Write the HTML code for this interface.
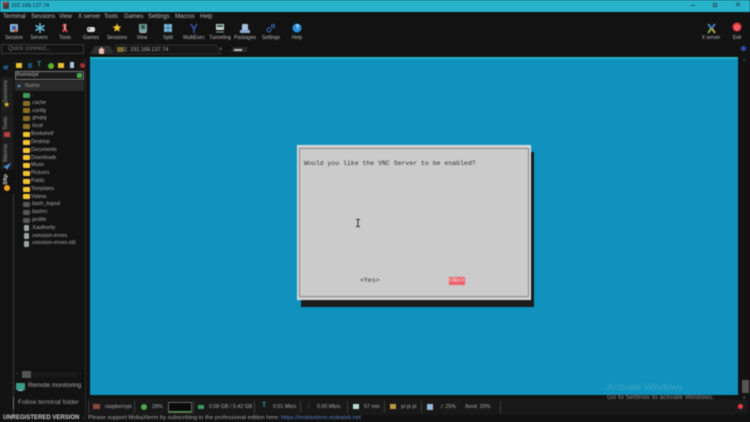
<!DOCTYPE html>
<html><head><meta charset="utf-8"><style>
html,body{margin:0;padding:0;background:#111}
#r{position:relative;width:750px;height:422px;overflow:hidden;background:#121212;font-family:"Liberation Sans",sans-serif;color:#b5b5b5;font-size:5.5px;filter:blur(.45px)}
#r div,#r span.a,#r svg{position:absolute}
.t{position:absolute;white-space:nowrap;line-height:8px}
.c{transform:translateX(-50%);color:#bbb;font-size:5px}
.m{top:13px;color:#b8b8b8;font-size:6px}
.f{position:absolute;left:23px;width:7px;height:5px;background:#f4c430;border-radius:1px}
.d{background:#8a6f22}
.g{background:#555}
.p{background:#9aa4a8;width:5px;left:24px;height:6px}
.n{position:absolute;left:31px;white-space:nowrap;line-height:8px;color:#aaa;font-size:5.1px}
.s{position:absolute;top:401px;height:12px;width:1px;background:#3c3c3c}
.b{top:403px;color:#aaa;font-size:5.3px}
.v{position:absolute;writing-mode:vertical-rl;transform:rotate(180deg);color:#999;font-size:5.5px;white-space:nowrap}
</style></head><body><div id="r">
<div style="left:0;top:0;width:750px;height:11.5px;background:#27b4cb"></div>
<div style="left:3px;top:2px;width:6px;height:7px;background:#4b3a40"></div>
<div style="left:4px;top:2px;width:3px;height:2px;background:#d33"></div>
<span class="t" style="left:11px;top:2px;color:#123;font-size:5.5px">192.168.137.74</span>
<div style="left:691px;top:5px;width:4px;height:1px;background:#345"></div>
<div style="left:713px;top:3px;width:4px;height:4px;border:1px solid #345;box-sizing:border-box"></div>
<span class="t" style="left:735px;top:2px;color:#234;font-size:7px">✕</span>

<span class="t m" style="left:3px">Terminal</span><span class="t m" style="left:31px">Sessions</span><span class="t m" style="left:59px">View</span><span class="t m" style="left:78px">X server</span><span class="t m" style="left:104px">Tools</span><span class="t m" style="left:124px">Games</span><span class="t m" style="left:148px">Settings</span><span class="t m" style="left:175px">Macros</span><span class="t m" style="left:200px">Help</span>

<svg style="left:0;top:22px" width="750" height="14" viewBox="0 22 750 14">
<rect x="10" y="24" width="8" height="8" rx="1" fill="#8fb2d8"/><rect x="12" y="26" width="4" height="4" fill="#2f5fa8"/><rect x="14" y="29" width="3" height="3" fill="#d05a3a"/>
<path d="M40 23v10M35.5 25.5l9 5M44.5 25.5l-9 5" stroke="#5fb7d0" stroke-width="1.6"/>
<path d="M63 24l4 8M66 24l-3 8" stroke="#d23a3a" stroke-width="2"/><path d="M65 24v6" stroke="#ddd" stroke-width="1"/>
<rect x="87" y="27" width="8" height="5" rx="2" fill="#ddd"/><circle cx="89" cy="29" r="1" fill="#555"/>
<path d="M117 23.5l1.3 2.800 3 .3-2.300 2 .7 3-2.700-1.600-2.700 1.600.7-3-2.300-2 3-.3z" fill="#f3c32c"/>
<rect x="139" y="24" width="8" height="8" fill="#7da0a8"/><rect x="141" y="25" width="4" height="4" fill="#2c5a3c"/><rect x="140" y="32" width="6" height="1" fill="#bbb"/>
<rect x="164" y="24" width="8" height="8" fill="#7ab8d8"/><path d="M168 24v8M164 28h8" stroke="#2f6f98" stroke-width=".7"/>
<path d="M191 24l3 5 3-5M194 29v4" stroke="#3d55b5" stroke-width="1.5" fill="none"/>
<rect x="216" y="24" width="8" height="6" fill="#ccc"/><rect x="217" y="25" width="6" height="2" fill="#2a6a48"/><path d="M216 32h8" stroke="#7a9" stroke-width="1"/>
<rect x="242" y="24" width="6" height="7" rx="1" fill="#a9bfe0"/><rect x="240" y="30" width="10" height="3" fill="#8ea8d0"/>
<circle cx="269" cy="30" r="2" fill="none" stroke="#3a6ec0"/><circle cx="273" cy="26" r="1.5" fill="none" stroke="#3a6ec0"/>
<circle cx="297" cy="28" r="4.5" fill="#2a8fd8"/>
<path d="M708 24l7 9M715 24l-7 9" stroke="#3a8fd0" stroke-width="1.8"/><path d="M708 33l3-4.500" stroke="#7ab03a" stroke-width="1.8"/><path d="M715 33l-3-4.500" stroke="#d8a030" stroke-width="1.8"/>
<circle cx="737" cy="27" r="4.5" fill="#e4383c"/><circle cx="737" cy="27.5" r="1.8" fill="none" stroke="#fbd" stroke-width=".7"/>
</svg>
<span class="t" style="left:295.5px;top:24px;color:#fff;font-size:6px;font-weight:bold">?</span>

<span class="t c" style="left:14px;top:34px">Session</span><span class="t c" style="left:39px;top:34px">Servers</span><span class="t c" style="left:65px;top:34px">Tools</span><span class="t c" style="left:91px;top:34px">Games</span><span class="t c" style="left:117px;top:34px">Sessions</span><span class="t c" style="left:142px;top:34px">View</span><span class="t c" style="left:168px;top:34px">Split</span><span class="t c" style="left:194px;top:34px">MultiExec</span><span class="t c" style="left:220px;top:34px">Tunneling</span><span class="t c" style="left:245px;top:34px">Packages</span><span class="t c" style="left:271px;top:34px">Settings</span><span class="t c" style="left:297px;top:34px">Help</span><span class="t c" style="left:711px;top:34px">X server</span><span class="t c" style="left:737px;top:34px">Exit</span>

<div style="left:1px;top:44px;width:83px;height:10px;border:1px solid #3a3a3a;box-sizing:border-box"></div>
<span class="t" style="left:8px;top:45px;color:#777;font-size:6px">Quick connect...</span>

<svg style="left:88px;top:43px" width="160" height="15" viewBox="0 0 160 15"><path d="M2 11L7 3h15l4 8z" fill="#2f2f2f"/><path d="M24 11L28 2h100l5 9z" fill="#161616" stroke="#333" stroke-width=".7"/><path d="M143 9l2-5h14v5z" fill="#2a2a2a"/></svg>
<svg style="left:97px;top:46px" width="9" height="8" viewBox="0 0 9 8"><path d="M4.5 1L8 4.500H7V8H2V4.500H1z" fill="#e8b8b0"/></svg>
<div style="left:117px;top:47px;width:7px;height:5px;background:#7a6a30"></div>
<span class="t" style="left:124px;top:46px;color:#aaa;font-size:5.5px">2. 192.168.137.74</span>
<span class="t" style="left:219px;top:46px;color:#888;font-size:6px">×</span>
<div style="left:234px;top:49px;width:8px;height:2px;background:#bbb"></div>
<div style="left:741px;top:46px;width:5px;height:5px;background:#2c4aa8;border-radius:2px;transform:rotate(-40deg)"></div>

<div style="left:0;top:58px;width:14px;height:358px;background:#131313"></div>
<span class="t" style="left:3px;top:64px;color:#2a88c8;font-size:10px;font-weight:bold">«</span>
<div style="left:1px;top:77px;width:12px;height:36px;background:#1e1e1e"></div>
<div style="left:1px;top:114px;width:12px;height:27px;background:#1e1e1e"></div>
<div style="left:1px;top:142px;width:12px;height:27px;background:#1e1e1e"></div>
<div style="left:1px;top:170px;width:13px;height:24px;background:#101010"></div>
<span class="v" style="left:3px;top:80px">Sessions</span><span class="v" style="left:3px;top:117px">Tools</span><span class="v" style="left:3px;top:144px">Macros</span><span class="v" style="left:3px;top:174px;color:#ddd;font-weight:bold">Sftp</span>
<span class="t" style="left:3px;top:101px;color:#e8c030;font-size:8px">★</span>
<div style="left:4px;top:132px;width:6px;height:5px;background:#b84040"></div>
<svg style="left:3px;top:163px" width="8" height="7" viewBox="0 0 8 7"><path d="M8 0L0 4l3 1 1 2z" fill="#4d8ed8"/></svg>
<div style="left:4px;top:185px;width:6px;height:6px;border-radius:50%;background:#f0a020"></div>
<div style="left:13px;top:194px;width:1px;height:222px;background:#3a3a3a"></div>

<div style="left:15px;top:58px;width:70px;height:12px;background:#151515"></div>
<div style="left:16px;top:63px;width:6px;height:5px;background:#e8c030"></div>
<div style="left:28px;top:63px;width:4px;height:5px;background:#1f4f78"></div>
<span class="t" style="left:37px;top:61px;color:#1f8a8a;font-size:7px;font-weight:bold">T</span>
<div style="left:48px;top:63px;width:6px;height:6px;border-radius:50%;background:#58b030"></div>
<div style="left:58px;top:63px;width:6px;height:5px;background:#e8c030"></div>
<div style="left:70px;top:62px;width:4px;height:6px;background:#a8c8e0"></div>
<div style="left:80px;top:63px;width:5px;height:5px;border-radius:50%;background:#a83030"></div>
<div style="left:15px;top:71px;width:69px;height:9px;border:1px solid #777;box-sizing:border-box;background:#1a1a1a"></div>
<span class="t" style="left:16px;top:71px;color:#bbb;font-size:5.5px">/home/pi/</span>
<div style="left:77px;top:73px;width:5px;height:5px;background:#4aa84a;border-radius:1px"></div>
<div style="left:15px;top:81px;width:69px;height:10px;background:#2a2a2a"></div>
<div style="left:17px;top:85px;width:0;height:0;border:2px solid transparent;border-top:3px solid #4d8ed8"></div>
<span class="t" style="left:25px;top:82px;color:#999;font-size:5.5px">Name</span>

<span class="f" style="top:93px;background:#3e9a58"></span><span class="n" style="top:91px">..</span>
<span class="f d" style="top:101px"></span><span class="n" style="top:99px">.cache</span>
<span class="f d" style="top:108px"></span><span class="n" style="top:107px">.config</span>
<span class="f d" style="top:116px"></span><span class="n" style="top:114px">.gnupg</span>
<span class="f d" style="top:124px"></span><span class="n" style="top:122px">.local</span>
<span class="f" style="top:132px"></span><span class="n" style="top:130px">Bookshelf</span>
<span class="f" style="top:140px"></span><span class="n" style="top:138px">Desktop</span>
<span class="f" style="top:148px"></span><span class="n" style="top:146px">Documents</span>
<span class="f" style="top:155px"></span><span class="n" style="top:154px">Downloads</span>
<span class="f" style="top:163px"></span><span class="n" style="top:161px">Music</span>
<span class="f" style="top:171px"></span><span class="n" style="top:169px">Pictures</span>
<span class="f" style="top:179px"></span><span class="n" style="top:177px">Public</span>
<span class="f" style="top:187px"></span><span class="n" style="top:185px">Templates</span>
<span class="f" style="top:194px"></span><span class="n" style="top:193px">Videos</span>
<span class="f g" style="top:202px"></span><span class="n" style="top:200px">.bash_logout</span>
<span class="f g" style="top:210px"></span><span class="n" style="top:208px">.bashrc</span>
<span class="f g" style="top:218px"></span><span class="n" style="top:216px">.profile</span>
<span class="f p" style="top:225px"></span><span class="n" style="top:224px">.Xauthority</span>
<span class="f p" style="top:233px"></span><span class="n" style="top:232px">.xsession-errors</span>
<span class="f p" style="top:241px"></span><span class="n" style="top:239px">.xsession-errors.old</span>

<div style="left:22px;top:371px;width:9px;height:7px;background:#555"></div>
<div style="left:31px;top:372px;width:46px;height:5px;background:#1a1a1a"></div>
<span class="t" style="left:16px;top:370px;color:#555">‹</span><span class="t" style="left:79px;top:370px;color:#555">›</span>
<div style="left:16px;top:383px;width:9px;height:7px;background:#3a9a88"></div><div style="left:18px;top:390px;width:5px;height:1px;background:#9cc"></div>
<span class="t" style="left:28px;top:382px;color:#aaa;font-size:6.3px">Remote monitoring</span>
<span class="t" style="left:18px;top:399px;color:#999;font-size:6.4px">Follow terminal folder</span>
<div style="left:13px;top:397px;width:1px;height:12px;background:#777"></div>

<div style="left:85px;top:58px;width:1px;height:358px;background:#2a2a2a"></div>
<div style="left:90px;top:57px;width:648px;height:337.5px;background:#0f92bd"></div>
<div style="left:90px;top:57px;width:648px;height:1.5px;background:#26b2c8"></div>
<div style="left:742px;top:380px;width:7px;height:13px;background:#555"></div>
<span class="t" style="left:743px;top:58px;color:#777;font-size:5px">^</span>
<span class="t" style="left:743px;top:394px;color:#777;font-size:5px">v</span>

<div style="left:301px;top:152px;width:233px;height:155px;background:#1c1c1c"></div>
<div style="left:297px;top:145px;width:234px;height:155px;background:#cbcbcb;border:1px solid #e2e2e2;box-sizing:border-box"></div>
<div style="left:299px;top:148px;width:230px;height:149px;border:1px solid #8a8a8a;box-sizing:border-box"></div>
<span class="t" style="left:304px;top:160px;font-family:'Liberation Mono',monospace;font-size:6.5px;color:#333">Would you like the VNC Server to be enabled?</span>
<span class="t" style="left:360px;top:277px;font-family:'Liberation Mono',monospace;font-size:6.5px;color:#333">&lt;Yes&gt;</span>
<div style="left:449px;top:277px;width:16px;height:8px;background:#f0616b"></div>
<span class="t" style="left:449px;top:277px;font-family:'Liberation Mono',monospace;font-size:6.5px;color:#f6dcdc">&lt;No&gt;</span>
<svg style="left:355px;top:219px" width="6" height="8" viewBox="0 0 6 8"><path d="M1 .5h4M1 7.5h4M3 .5v7" stroke="#333" stroke-width="1" fill="none"/></svg>

<span class="t" style="left:607px;top:382px;color:#3fa5c4;font-size:9.6px;line-height:11px">Activate Windows</span>
<span class="t" style="left:607px;top:394px;color:#8a8a8a;font-size:6.8px">Go to Settings to activate Windows.</span>

<div style="left:88px;top:399px;width:647px;height:16px;background:#181818"></div>
<div class="s" style="left:88px"></div><div class="s" style="left:134px"></div><div class="s" style="left:193px"></div><div class="s" style="left:254px"></div><div class="s" style="left:300px"></div><div class="s" style="left:347px"></div><div class="s" style="left:384px"></div><div class="s" style="left:421px"></div><div class="s" style="left:500px"></div>
<div style="left:93px;top:404px;width:7px;height:5px;background:#8a4a3a"></div>
<span class="t b" style="left:105px">raspberrypi</span>
<div style="left:141px;top:404px;width:6px;height:6px;border-radius:50%;background:#4ca84c"></div>
<span class="t b" style="left:152px">28%</span>
<div style="left:168px;top:402px;width:24px;height:11px;background:#0a0a0a;border:1px solid #666;box-sizing:border-box"></div>
<div style="left:169px;top:411px;width:22px;height:1px;background:#3aa03a"></div>
<div style="left:198px;top:405px;width:6px;height:4px;background:#3a9a5a"></div>
<span class="t b" style="left:209px">0.08 GB / 0.42 GB</span>
<span class="t" style="left:262px;top:402px;color:#1f9a8a;font-size:7px;font-weight:bold">T</span>
<span class="t b" style="left:273px">0.01 Mb/s</span>
<span class="t" style="left:307px;top:402px;color:#2a6ac8;font-size:7px;font-weight:bold">↓</span>
<span class="t b" style="left:317px">0.00 Mb/s</span>
<div style="left:353px;top:404px;width:6px;height:5px;background:#b8dcd8"></div>
<span class="t b" style="left:364px">57 min</span>
<div style="left:390px;top:404px;width:6px;height:5px;background:#b89a40"></div>
<span class="t b" style="left:401px">pi pi pi</span>
<div style="left:427px;top:404px;width:6px;height:6px;background:#9ab8d8"></div>
<span class="t b" style="left:441px">/: 25%</span>
<span class="t b" style="left:465px">/boot: 20%</span>
<div style="left:734px;top:400px;width:14px;height:13px;background:#1a1a1a"></div>
<div style="left:738px;top:404px;width:5px;height:5px;border-radius:50%;background:#f23a44"></div>

<span class="t" style="left:3px;top:414px;color:#ccc;font-size:6px;font-weight:bold">UNREGISTERED VERSION</span>
<span class="t" style="left:83px;top:414px;color:#aaa;font-size:5.8px">-&nbsp; Please support MobaXterm by subscribing to the professional edition here:</span>
<span class="t" style="left:281px;top:414px;color:#5a80c8;font-size:5.8px">https://mobaxterm.mobatek.net</span>
</div></body></html>
